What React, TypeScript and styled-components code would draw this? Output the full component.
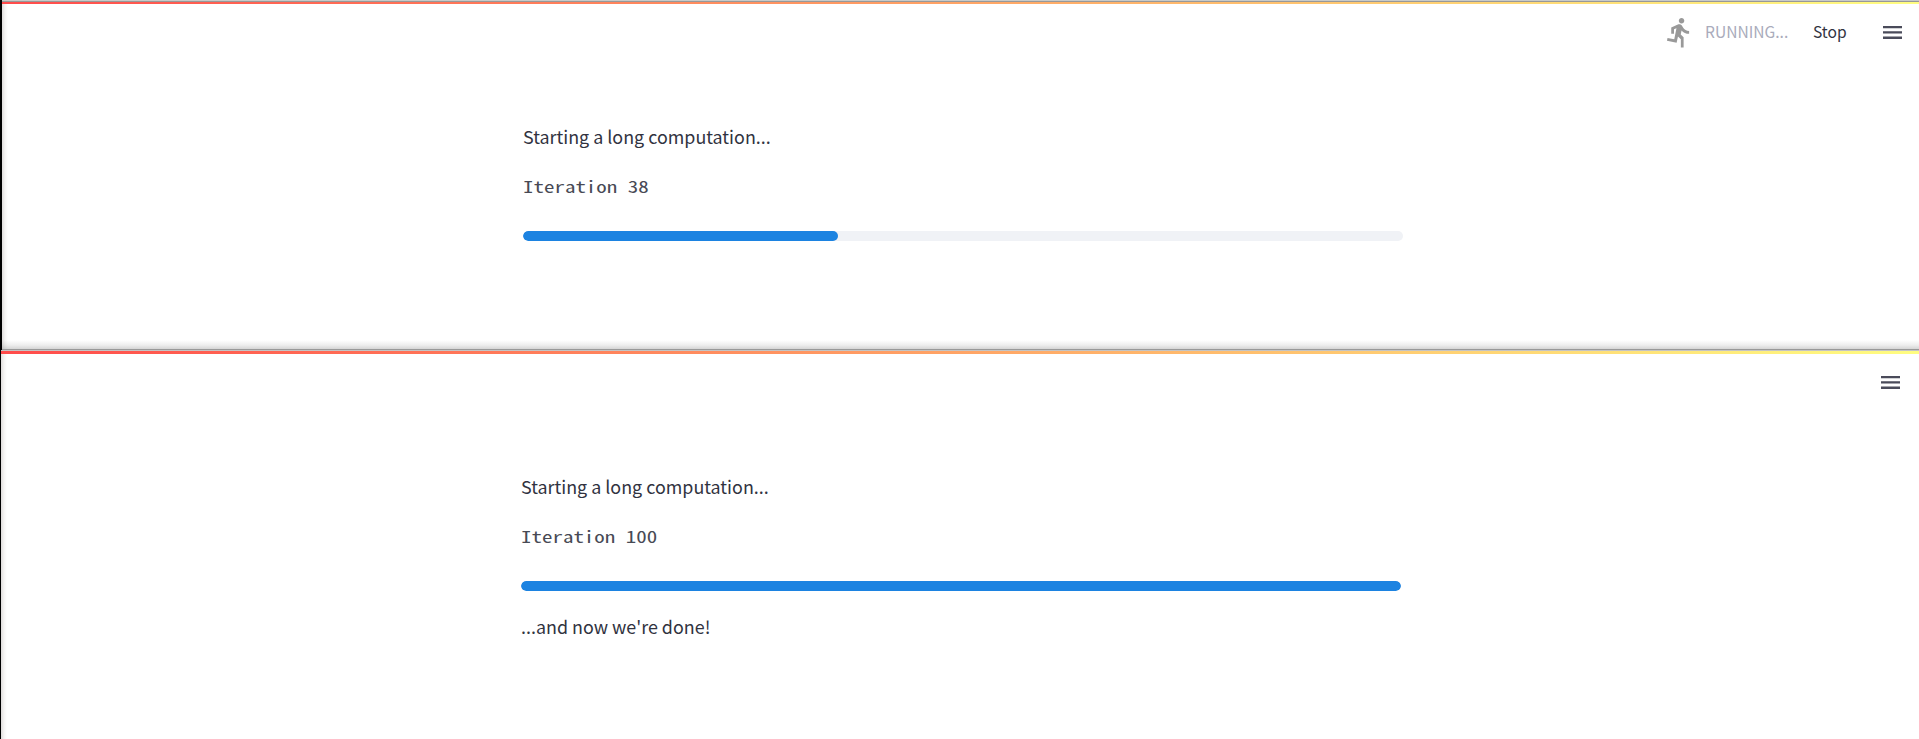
import React from "react";
import styled, { createGlobalStyle } from "styled-components";

const GlobalStyle = createGlobalStyle`
  * { box-sizing: border-box; }
  body {
    margin: 0;
    background: #fff;
    color: #31333f;
    font-family: "Noto Sans CJK SC", "Open Sans", sans-serif;
  }
`;

const Page = styled.div`
  height: 739px;
  display: flex;
  flex-direction: column;
  overflow: hidden;
`;

const Pane = styled.section<{ $height: number; $edge: number; $framed?: boolean }>`
  height: ${(p) => p.$height}px;
  display: flex;
  flex-direction: column;
  border-left: ${(p) => p.$edge}px solid #000;
  background:
    ${(p) =>
      p.$framed
        ? `linear-gradient(#989898, #989898) bottom / 100% 1px no-repeat,
           linear-gradient(to bottom, rgba(255, 255, 255, 0), rgba(140, 140, 140, 0.15) 50%, rgba(140, 140, 140, 0.42)) bottom / 100% 10px no-repeat,`
        : ""}
    linear-gradient(to right, #dedcdb, #f5f4f3 3px, #fff 6px) left / 6px 100% no-repeat,
    #fff;
`;

const TopLine = styled.div<{ $dark?: boolean }>`
  height: ${(p) => (p.$dark ? 2 : 1)}px;
  flex: none;
  background: ${(p) =>
    p.$dark ? "linear-gradient(to bottom, #c8cac8 1px, #989898 1px)" : "#c4c4c4"};
`;

const Decoration = styled.div<{ $height: number }>`
  height: ${(p) => p.$height}px;
  flex: none;
  background: linear-gradient(to right, #ff4b4b, #fffd80);
`;

const Header = styled.header<{ $right: number }>`
  height: 57px;
  flex: none;
  display: flex;
  justify-content: flex-end;
  align-items: center;
  padding-right: ${(p) => p.$right}px;
`;

const Runner = styled.svg`
  width: 33px;
  height: 33px;
  margin-right: 9px;
  fill: #999;
`;

const Status = styled.span`
  width: 108px;
  padding-bottom: 3px;
  font-size: 15.6px;
  color: #a9abbb;
  white-space: nowrap;
`;

const StopButton = styled.button`
  width: 70px;
  padding: 0 0 3px;
  border: 0;
  background: none;
  text-align: left;
  font: inherit;
  font-size: 15.6px;
  color: #31333f;
`;

const MenuIcon = styled.svg`
  width: 19px;
  height: 13px;
  fill: #4a4b5a;
`;

const Content = styled.main<{ $left: number }>`
  width: 880px;
  margin-left: ${(p) => p.$left}px;
  padding-top: 60px;
  display: flex;
  flex-direction: column;
`;

const Paragraph = styled.p`
  margin: 0;
  height: 30px;
  line-height: 30px;
  font-size: 17.9px;
  white-space: nowrap;
`;

const Code = styled.div`
  height: 24px;
  margin: 23px 0 33px;
  line-height: 24px;
  font-family: "Noto Sans Mono CJK SC", "Liberation Mono", monospace;
  font-size: 16.5px;
  color: #484a55;
  transform: scaleX(1.27);
  transform-origin: left;
  white-space: pre;
`;

const Track = styled.div`
  height: 10px;
  margin-bottom: 20px;
  border-radius: 5px;
  background: #f0f2f6;
  overflow: hidden;
`;

const Fill = styled.div`
  height: 10px;
  border-radius: 5px;
  background: #1c83e1;
`;

const Menu = () => (
  <MenuIcon viewBox="0 0 19 13">
    <path d="M0 0h19v2.3H0zM0 5.3h19v2.3H0zM0 10.6h19v2.3H0z" />
  </MenuIcon>
);

const Progress = ({ value }: { value: number }) => (
  <Track>
    <Fill style={{ width: `${value}%` }} />
  </Track>
);

export default function App() {
  return (
    <Page>
      <GlobalStyle />
      <Pane $height={350} $edge={2} $framed>
        <TopLine $dark />
        <Decoration $height={2} />
        <Header $right={17}>
          <Runner viewBox="0 0 24 24">
            <path d="M13.49 5.48c1.1 0 2-.9 2-2s-.9-2-2-2-2 .9-2 2 .9 2 2 2zm-3.6 13.9l1-4.4 2.1 2v6h2v-7.5l-2.1-2 .6-3c1.3 1.5 3.3 2.5 5.5 2.5v-2c-1.9 0-3.5-1-4.3-2.4l-1-1.6c-.4-.6-1-1-1.7-1-.3 0-.5.1-.8.1l-5.2 2.2v4.7h2v-3.4l1.8-.7-1.6 8.1-4.9-1-.4 2 7 1.4z" />
          </Runner>
          <Status>RUNNING...</Status>
          <StopButton>Stop</StopButton>
          <Menu />
        </Header>
        <Content $left={521}>
          <Paragraph>Starting a long computation...</Paragraph>
          <Code>Iteration 38</Code>
          <Progress value={35.8} />
        </Content>
      </Pane>
      <Pane $height={389} $edge={1}>
        <TopLine />
        <Decoration $height={3} />
        <Header $right={19}>
          <Menu />
        </Header>
        <Content $left={520}>
          <Paragraph>Starting a long computation...</Paragraph>
          <Code>Iteration 100</Code>
          <Progress value={100} />
          <Paragraph>...and now we're done!</Paragraph>
        </Content>
      </Pane>
    </Page>
  );
}
